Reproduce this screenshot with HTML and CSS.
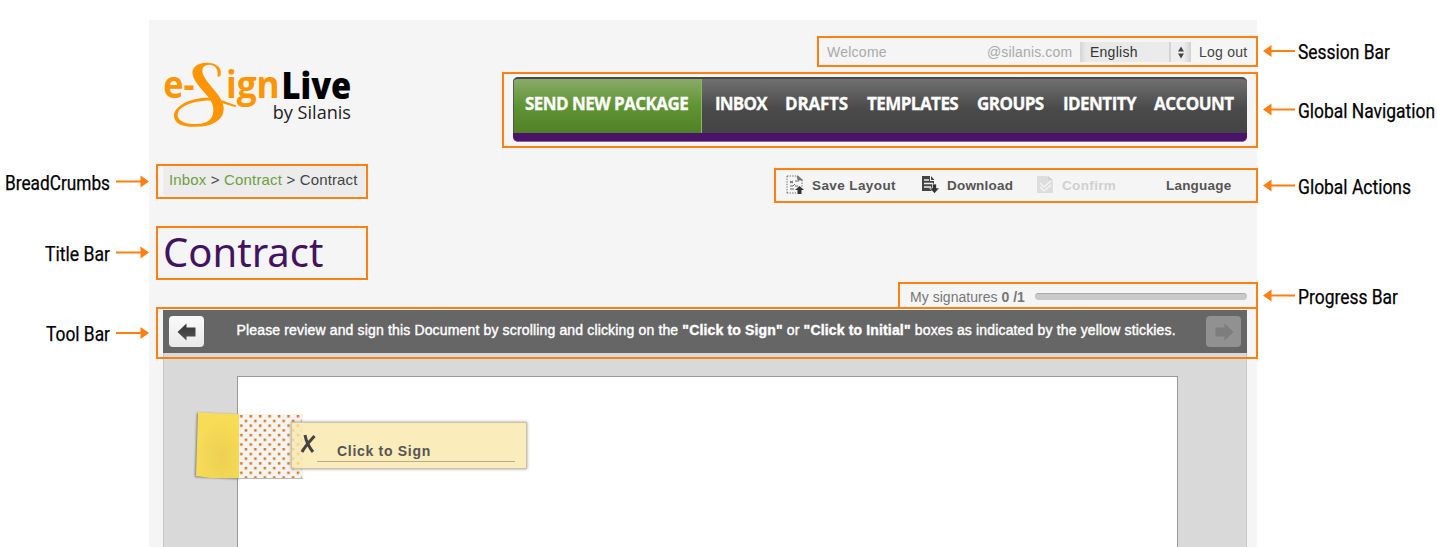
FILE: index.html
```html
<!DOCTYPE html>
<html lang="en">
<head>
<meta charset="utf-8">
<title>Contract</title>
<link rel="stylesheet" href="styles.css">
</head>
<body>
<main class="screen">
  <header class="header">
    <svg class="logo" viewBox="50 150 580 210" role="img" aria-label="e-SignLive by Silanis">
      <g class="logo-name" font-size="113">
        <text x="54" y="264" fill="#ff9500" textLength="94" lengthAdjust="spacingAndGlyphs">e-</text>
        <text x="242" y="264" fill="#ff9500" textLength="162" lengthAdjust="spacingAndGlyphs">ign</text>
        <text x="409" y="266" class="logo-live" textLength="210" lengthAdjust="spacingAndGlyphs">Live</text>
      </g>
      <text x="383" y="326" class="logo-by" textLength="235" lengthAdjust="spacingAndGlyphs">by Silanis</text>
      <path fill="#ff9500" d="M225 199C234 172 211 158 184 158C155 158 138 174 142 193C146 222 184 248 199 277C212 307 203 341 158 342C120 344 96 332 97 314C99 288 143 274 180 272C215 270 240 284 270 291L273 286C245 278 222 263 180 263C128 266 86 290 86 318C88 346 122 353 160 350C213 347 239 322 235 290C230 252 180 220 172 188C168 171 181 163 194 164C213 166 219 181 217 200Z"/>
    </svg>
    <div class="header-side">
      <div class="session">
        <span class="muted w-welcome">Welcome</span>
        <span class="muted w-mail">@silanis.com</span>
        <span class="select"><span>English</span><svg class="stepper" viewBox="0 0 8 14"><path d="M4 0.500L7.200 6H.8ZM4 13.500L.8 8H7.200Z" fill="#444"/></svg></span>
        <a class="logout">Log out</a>
      </div>
      <nav class="nav">
        <div class="nav-row">
          <a class="nav-send">SEND NEW PACKAGE</a>
          <a class="n1">INBOX</a><a class="n2">DRAFTS</a><a class="n3">TEMPLATES</a><a class="n4">GROUPS</a><a class="n5">IDENTITY</a><a class="n6">ACCOUNT</a>
        </div>
      </nav>
    </div>
  </header>

  <div class="subhead">
    <div class="crumbs"><a>Inbox</a> &gt; <a>Contract</a> &gt; Contract</div>
    <div class="actions">
      <a class="a-save"><svg class="icon" viewBox="0 0 18 20"><g fill="none" stroke="#666"><path d="M1 1H12M1 1V18M1 18H10M16 5V12" stroke-dasharray="1.300 1.300"/><path d="M11 1.500L12 5H16.500L12 1Z" fill="#777" stroke="#666" stroke-width=".7"/><path d="M4 6L7 8M7 6L4 8M4 11H7L9 9M4 14H8M9 6H13M9 11H12" stroke-width="1"/></g><path d="M13.500 11L18 15H15.500V19H11.500V15H9Z" fill="#333"/></svg><span>Save Layout</span></a>
      <a class="a-down"><svg class="icon" viewBox="0 0 18 20"><path d="M1 1H9V6H13V16H1Z" fill="#444"/><path d="M10 1L13.500 5H10Z" fill="#444"/><path d="M3 5H8M3 8.500H12M3 12H10" stroke="#eee" stroke-width="1.300"/><path d="M11.500 9H15.500V13H18.500L13.500 18.500L8.500 13H11.500Z" fill="#333" stroke="#f5f5f5" stroke-width=".7"/></svg><span>Download</span></a>
      <a class="a-conf"><svg class="icon" viewBox="0 0 18 20"><path d="M1 1H11L17 6V18H1Z" fill="#ddd"/><path d="M12 1L17 5H12Z" fill="#d0d0d0"/><path d="M4 8L8 12L15 6M4 12L8 16L15 10" fill="none" stroke="#f5f5f5" stroke-width="1.200"/></svg><span>Confirm</span></a>
      <a class="a-lang">Language</a>
    </div>
  </div>

  <h1 class="title">Contract</h1>

  <div class="progress"><span class="sig">My signatures <b>0 /1</b></span><span class="track"></span></div>

  <div class="toolbar">
    <span class="btn"><svg viewBox="0 0 20 18"><defs><linearGradient id="g" x2="0" y2="1"><stop stop-color="#333"/><stop offset="1" stop-color="#555"/></linearGradient></defs><path d="M0.500 9L9.500 .5V4.500H18.500V13.500H9.500V17.500Z" fill="url(#g)"/></svg></span>
    <p class="hint">Please review and sign this Document by scrolling and clicking on the <b>"Click to Sign"</b> or <b>"Click to Initial"</b> boxes as indicated by the yellow stickies.</p>
    <span class="btn btn-off"><svg viewBox="0 0 20 18"><path d="M19.500 9L10.500 .5V4.500H1.500V13.500H10.500V17.500Z" fill="#7d7d7d"/></svg></span>
  </div>

  <section class="viewer">
    <div class="paper">
      <svg class="sticky" viewBox="0 0 112 72">
        <defs>
          <pattern id="dots" x="45.500" y="6" width="9.430" height="9.430" patternUnits="userSpaceOnUse"><rect x="3.600" y="0" width="2.500" height="2.500" fill="#d07b1e"/><rect x="8.200" y="4.700" width="1.230" height="2.500" fill="#d07b1e"/><rect x="0" y="4.700" width="1.270" height="2.500" fill="#d07b1e"/></pattern>
          <radialGradient id="tab" cx=".6" cy=".7" r=".6"><stop stop-color="#ecd053"/><stop offset="1" stop-color="#f7dc58"/></radialGradient>
          <filter id="soft" x="-20%" y="-20%" width="140%" height="140%"><feGaussianBlur stdDeviation="1.200"/></filter>
        </defs>
        <path d="M6 4L4 68L48 70V6Z" fill="#777" filter="url(#soft)"/>
        <rect x="48" y="5" width="65" height="65" fill="#f6f4f3"/>
        <rect x="48" y="5" width="63" height="64" fill="url(#dots)"/>
        <path d="M48 69.500H112" stroke="#bbb"/>
        <path d="M7 3L20 4L48 5V69H20L5 67Z" fill="url(#tab)"/>
      </svg>
      <div class="field">
        <svg class="mark" viewBox="0 0 16 20"><path d="M5 1C6 7 9 13 13 18M14.500 2C10 7 5 12 2 18" fill="none" stroke="#444" stroke-width="3"/></svg>
        <span class="field-line">Click to Sign</span>
      </div>
    </div>
  </section>
</main>

<svg class="callouts" width="1437" height="547" viewBox="0 0 1437 547">
  <defs><path id="to-left" d="M1263 0L1271.500 -6V-1H1295V1H1271.500V6Z"/><path id="to-right" d="M149 0L140.500 -6V-1H116V1H140.500V6Z"/></defs>
  <g fill="none" stroke="#ff7f11" stroke-width="2">
    <rect x="818" y="37" width="439" height="29"/>
    <rect x="503" y="73" width="754" height="74"/>
    <rect x="157" y="165" width="210" height="33"/>
    <rect x="157" y="227" width="210" height="52"/>
    <rect x="775" y="169" width="482" height="33"/>
    <path d="M899 308V283H1257V308"/>
    <rect x="157" y="308" width="1100" height="50"/>
  </g>
  <g fill="#ff7f11">
    <use href="#to-left" y="51"/><use href="#to-left" y="109.500"/><use href="#to-left" y="185.500"/><use href="#to-left" y="295.500"/>
    <use href="#to-right" y="181.500"/><use href="#to-right" y="252.500"/><use href="#to-right" y="333"/>
  </g>
  <g class="labels">
    <text x="1298" y="59" textLength="92" lengthAdjust="spacingAndGlyphs">Session Bar</text>
    <text x="1298" y="118" textLength="137" lengthAdjust="spacingAndGlyphs">Global Navigation</text>
    <text x="1298" y="194" textLength="113" lengthAdjust="spacingAndGlyphs">Global Actions</text>
    <text x="1298" y="304" textLength="100" lengthAdjust="spacingAndGlyphs">Progress Bar</text>
    <text x="5" y="190" textLength="105" lengthAdjust="spacingAndGlyphs">BreadCrumbs</text>
    <text x="45" y="261" textLength="65" lengthAdjust="spacingAndGlyphs">Title Bar</text>
    <text x="46" y="341" textLength="64" lengthAdjust="spacingAndGlyphs">Tool Bar</text>
  </g>
</svg>
</body>
</html>
```

FILE: styles.css
```css
* { box-sizing: border-box; }
body { margin: 0; height: 547px; overflow: hidden; background: #fff; font: 14px "Liberation Sans", sans-serif; color: #444; position: relative; padding: 20px 0 0 149px; }
.screen { width: 1108px; height: 527px; background: #f5f5f5; padding: 0 10px 0 14px; overflow: hidden; display: flex; flex-direction: column; }
.screen > * { flex-shrink: 0; }
.header { display: flex; justify-content: space-between; height: 144px; }
.logo { width: 193px; height: 70px; margin-top: 40px; margin-left: -1px; flex: none; overflow: visible; }
.logo-name { font-family: "Open Sans", sans-serif; font-weight: 700; }
.logo-live { font-weight: 800; fill: #000; }
.logo-by { font: 53px "Open Sans", sans-serif; fill: #222; }
.header-side { width: 734px; }
.session { height: 57px; padding-top: 22px; display: flex; align-items: flex-start; justify-content: flex-end; line-height: 20px; white-space: nowrap; letter-spacing: .25px; }
.muted { color: #aaa; }
.w-welcome { width: 160px; }
.w-mail { width: 93px; letter-spacing: .15px; }
.select { width: 111px; height: 20px; padding: 0 6px 0 10px; display: flex; justify-content: space-between; align-items: center; color: #333; background: linear-gradient(90deg, #d5d5d5, #e9e9e9 6px, #ebebeb 89px, #bbb 90px, #eee 91px, #ececec 104px, #d2d2d2); }
.stepper { width: 8px; height: 13px; }
.logout { margin-left: 8px; width: 48px; }
.nav { height: 65px; border-radius: 5px; overflow: hidden; background: #481368; border-top: 2px solid #484848; border-bottom: 1px solid #82659a; }
.nav-row { height: 54px; display: flex; line-height: 50px; color: #fff; font-family: "Open Sans", sans-serif; font-weight: 700; font-size: 17px; letter-spacing: -.55px; -webkit-text-stroke: .3px #fff; white-space: nowrap; background: linear-gradient(#707070, #4a4a4a 55%, #444); }
.nav-send { width: 189px; height: 54px; padding-left: 11px; background: linear-gradient(#8aab68, #5f9434 50%, #4f8226); border-right: 1px solid #8bb765; border-left: 1px solid #555; }
.n1 { margin-left: 13px; width: 70px; letter-spacing: -.8px; }
.n2 { width: 82px; letter-spacing: -.2px; }
.n3 { width: 110px; }
.n4 { width: 86px; }
.n5 { width: 91px; }
.subhead { display: flex; justify-content: space-between; height: 62px; }
.crumbs { width: 202px; height: 32px; padding-left: 6px; line-height: 32px; font-size: 15px; background: #ececec; border-radius: 4px; white-space: nowrap; letter-spacing: .16px; }
.crumbs a { color: #6f9f3f; }
.actions { display: flex; width: 462px; height: 42px; align-items: center; font-weight: 700; font-size: 13.5px; color: #555; white-space: nowrap; letter-spacing: .2px; }
.actions a { display: flex; align-items: center; }
.icon { width: 18px; height: 20px; margin-right: 8px; flex: none; }
.a-save { width: 136px; letter-spacing: .4px; padding-left: 1px; }
.a-down { width: 115px; }
.a-conf { width: 130px; color: #d0d0d0; letter-spacing: .35px; }
.title { margin: 0; height: 56px; font: 400 40px/52px "Noto Sans", sans-serif; color: #43135f; }
.progress { display: flex; justify-content: flex-end; align-items: center; height: 28px; padding-top: 1px; color: #777; }
.sig { width: 125px; white-space: nowrap; letter-spacing: .03px; }
.track { width: 212px; height: 7px; border-radius: 4px; background: #c9c9c9; border-top: 1px solid #aaa; }
.toolbar { display: flex; justify-content: space-between; align-items: center; height: 43px; background: #666; padding: 0 6px; }
.btn { width: 35px; height: 31px; border-radius: 4px; background: linear-gradient(#fafafa, #e9e9e9); display: flex; align-items: center; justify-content: center; }
.btn svg { width: 20px; height: 18px; }
.btn-off { background: #919191; }
.hint { margin: 0 0 3px; width: 937px; color: #fff; white-space: nowrap; letter-spacing: .155px; -webkit-text-stroke: .4px #fff; }
.viewer { height: 194px; background: #d9d9d9; padding: 23px 68px 0 73px; border: 1px solid #c8c8c8; border-width: 0 1px; }
.paper { height: 171px; background: #fff; border: 1px solid #999; border-bottom: 0; position: relative; padding: 45px 0 0 53px; }
.field { position: relative; width: 236px; height: 47px; background: rgba(249, 231, 170, .8); border: 1px solid #ccc3a2; box-shadow: 0 0 3px #999; padding: 11px 11px 0 8px; display: flex; }
.mark { width: 16px; height: 20px; flex: none; }
.field-line { margin-left: 1px; flex: 1; height: 28px; padding-left: 20px; line-height: 34px; font-weight: 700; border-bottom: 1px solid #b5ad8c; color: #555; letter-spacing: .7px; white-space: nowrap; }
.sticky { position: absolute; left: -47px; top: 32px; width: 112px; height: 72px; }
.callouts { position: absolute; left: 0; top: 0; }
.labels { font: 400 20px Roboto, sans-serif; fill: #000; stroke: #000; stroke-width: .25px; }
```
